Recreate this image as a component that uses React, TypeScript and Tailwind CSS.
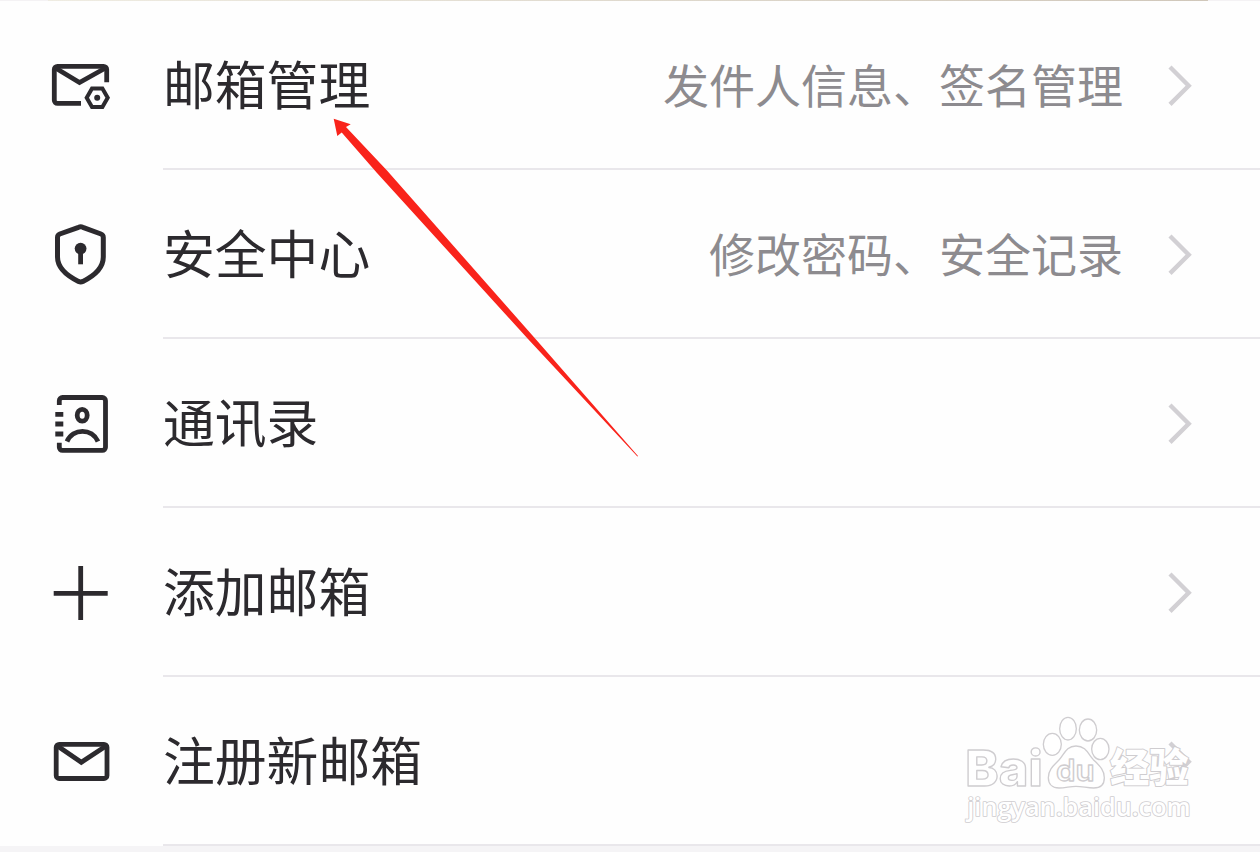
import type { ReactNode } from "react";

interface MenuRow {
  title: string;
  detail?: string;
  icon: ReactNode;
}

const rows: MenuRow[] = [
  {
    title: "邮箱管理",
    detail: "发件人信息、签名管理",
    icon: (
      <>
        <path d="M33 50.4H9.5a3.2 3.2 0 0 1-3.2-3.2V16.5a3.2 3.2 0 0 1 3.2-3.2h46a3.2 3.2 0 0 1 3.2 3.2v12.8" />
        <path d="m7.5 15 24 14.5 26-14.5" />
        <path d="M38.7 44.8 44 35.6h10.4l5.3 9.2-5.3 9.2H44Z" strokeWidth="4" />
        <circle cx="49.2" cy="44.8" r="3" fill="currentColor" stroke="none" />
      </>
    ),
  },
  {
    title: "安全中心",
    detail: "修改密码、安全记录",
    icon: (
      <>
        <path d="M30.5 5.3q2.2-.9 4.4 0L53 12q2.3.9 2.3 3.4V35c0 11.5-9.5 19-20.4 24.4q-2.2 1-4.4 0C19.5 54 9.5 46.5 9.5 35V15.4q0-2.5 2.3-3.4Z" strokeWidth="5" />
        <circle cx="32.6" cy="26.6" r="5.9" fill="currentColor" stroke="none" />
        <path d="M32.6 28v14.3" />
      </>
    ),
  },
  {
    title: "通讯录",
    icon: (
      <>
        <path d="M11.3 14V9.7a3.2 3.2 0 0 1 3.2-3.2h39.8a3.2 3.2 0 0 1 3.2 3.2v46.5a3.2 3.2 0 0 1-3.2 3.2H14.5a3.2 3.2 0 0 1-3.2-3.2v-4.5" />
        <path d="M7.3 23.3h8M7.3 33h8M7.3 43h8" />
        <ellipse cx="34.2" cy="24.3" rx="5" ry="5.9" />
        <path d="M19 50.5c6-13.5 25-13.5 31 0" />
      </>
    ),
  },
  {
    title: "添加邮箱",
    icon: <path d="M5.7 33.3h54M32.7 6v54" />,
  },
  {
    title: "注册新邮箱",
    icon: (
      <>
        <rect x="8.2" y="15.3" width="50.8" height="34.2" rx="3" />
        <path d="m9.5 17 23.8 16.3L58 17" />
      </>
    ),
  },
];

function Row({ title, detail, icon }: MenuRow) {
  return (
    <div className="flex h-[169px] pl-12">
      <div className="flex w-[115px] items-center pb-0.5">
        <svg className="size-16 text-[#2c2a2e]" viewBox="0 0 64 64" fill="none" stroke="currentColor" strokeWidth="4.8">
          {icon}
        </svg>
      </div>
      <div className="flex flex-1 items-center border-b-2 border-[#e9e7eb] pr-[66px]">
        <span className="pb-1 text-[51.8px] leading-none text-[#2c2a2e]">{title}</span>
        {detail && <span className="ml-auto pb-1 text-[46px] leading-none text-[#8d8b8f]">{detail}</span>}
        <svg
          className={detail ? "ml-[43px] h-11 w-7 text-[#d2d0d4]" : "ml-auto h-11 w-7 text-[#d2d0d4]"}
          viewBox="0 0 28 44"
          fill="none"
          stroke="currentColor"
          strokeWidth="4.4"
        >
          <path d="m4 4 18.700 18.700L4 41.400" />
        </svg>
      </div>
    </div>
  );
}

function Pointer() {
  return (
    <svg className="absolute left-[320px] top-[105px] h-[360px] w-[330px]" viewBox="0 0 330 360">
      <path d="M13.7 13.7 30.7 19.3 26 22 67 65.500 216 234.500 318 351 317.400 351.600 208 234 57 68 21.700 27.500 17.300 31Z" fill="#f9231b" />
    </svg>
  );
}

// White fill with a thin grey outline, drawn over the last row.
function Watermark() {
  return (
    <svg
      className="absolute left-[950px] top-[700px] h-[152px] w-[310px]"
      viewBox="0 0 930 456"
      fill="#ffffff"
      stroke="#cfcdd0"
      strokeWidth="4"
      strokeLinejoin="round"
    >
      <text x="46" y="258" textLength="232" lengthAdjust="spacingAndGlyphs" fontFamily="Inter" fontWeight="800" fontSize="148">
        Bai
      </text>
      <ellipse cx="307" cy="133" rx="27" ry="33" />
      <ellipse cx="354" cy="86" rx="25" ry="34" />
      <ellipse cx="414" cy="90" rx="26" ry="33" />
      <ellipse cx="451" cy="147" rx="26" ry="32" />
      <path d="M378 138c-31 0-35 26-51 42-17 17-32 29-32 53 0 20 13 31 32 31 20 0 32-5 51-5s34 5 53 5c20 0 32-11 32-31 0-25-17-38-33-54-15-16-22-41-52-41Z" />
      <text x="318" y="242" textLength="116" lengthAdjust="spacingAndGlyphs" fontFamily="Inter" fontWeight="600" fontSize="88">
        du
      </text>
      <text x="480" y="247" textLength="236" lengthAdjust="spacingAndGlyphs" fontFamily="Noto Sans CJK SC" fontWeight="900" fontSize="118" strokeWidth="6" paintOrder="stroke">
        经验
      </text>
      <text x="52" y="348" textLength="670" lengthAdjust="spacingAndGlyphs" fontFamily="Open Sans" fontWeight="600" fontSize="74" strokeWidth="5" paintOrder="stroke">
        jingyan.baidu.com
      </text>
    </svg>
  );
}

export default function App() {
  return (
    <div className="relative h-[852px] w-[1260px] overflow-hidden bg-[#fefefe] font-['Noto_Sans_CJK_SC',sans-serif]">
      <div className="flex h-px">
        <div className="w-12 bg-[#f4f2f4]" />
        <div className="w-[1160px] bg-linear-to-r from-[#efece2] to-[#d0c7ba]" />
        <div className="flex-1 bg-[#f4f2f4]" />
      </div>
      {rows.map((row) => (
        <Row key={row.title} {...row} />
      ))}
      <div className="h-[6px] bg-[#f5f4f6]" />
      <Pointer />
      <Watermark />
    </div>
  );
}
